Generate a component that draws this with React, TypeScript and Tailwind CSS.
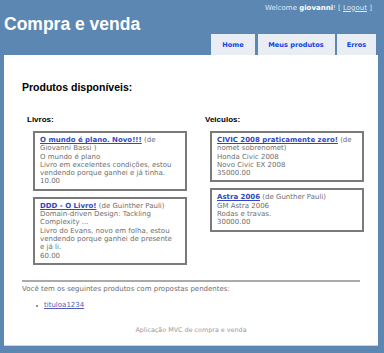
import React from "react";

const body = "font-['DejaVu_Sans',Verdana,sans-serif]";
const head = "font-['Liberation_Sans',Arial,sans-serif]";

function Card({ children }: { children: React.ReactNode }) {
  return (
    <div className="border-2 border-[#7a7a7a] bg-white px-[5px] py-[3px] text-[7px] leading-[8.3px] text-[#6e6e6e] whitespace-nowrap">
      {children}
    </div>
  );
}

function T({ children }: { children: React.ReactNode }) {
  return <a className="font-bold text-[#3347c0] underline">{children}</a>;
}

export default function App() {
  return (
    <div className={`w-[384px] h-[353px] bg-[#5c87b2] overflow-hidden ${body}`}>
      <div className="flex h-[55px] justify-between">
        <div className={`${head} pl-[4px] pt-[14px] text-[17.5px] leading-[20px] font-bold text-white`}>
          Compra e venda
        </div>
        <div className="flex flex-col justify-between items-end pr-[8px]">
          <div className="pt-[3.5px] pr-[4px] text-[7px] leading-[8.5px] text-[#dfe7f0]">
            Welcome <b className="text-white">giovanni</b>! [ <span className="underline">Logout</span> ]
          </div>
          <div className="flex gap-[2.5px]">
            <div className="w-[44px] h-[21px] bg-[#e8eef4] flex items-center justify-center text-[6.6px] font-bold text-[#1640e0] pt-[2px]">Home</div>
            <div className="w-[77px] h-[21px] bg-[#e8eef4] flex items-center justify-center text-[6.6px] font-bold text-[#1640e0] pt-[2px]">Meus produtos</div>
            <div className="w-[39px] h-[21px] bg-[#e8eef4] flex items-center justify-center text-[6.6px] font-bold text-[#1640e0] pt-[2px]">Erros</div>
          </div>
        </div>
      </div>
      <div className="ml-[4px] w-[374px] h-[291px] bg-white border-b border-[#c8d6e4] px-[18px] pt-[26px]">
        <h2 className={`${head} text-[10.5px] leading-[12px] font-bold text-black`}>Produtos disponíveis:</h2>
        <div className="flex mt-[22px]">
          <div className="w-[178px]">
            <h3 className={`${head} ml-[5px] text-[8px] leading-[10px] font-bold text-black`}>Livros:</h3>
            <div className="ml-[11px] w-[154px] mt-[6px] flex flex-col gap-[6px]">
              <Card>
                <T>O mundo é plano. Novo!!!</T> (de<br />
                Giovanni Bassi )<br />
                O mundo é plano<br />
                Livro em excelentes condições, estou<br />
                vendendo porque ganhei e já tinha.<br />
                10.00
              </Card>
              <Card>
                <T>DDD - O Livro!</T> (de Guinther Pauli)<br />
                Domain-driven Design: Tackling<br />
                Complexity ...<br />
                Livro do Evans, novo em folha, estou<br />
                vendendo porque ganhei de presente<br />
                e já li.<br />
                60.00
              </Card>
            </div>
          </div>
          <div className="w-[160px]">
            <h3 className={`${head} ml-[5px] text-[8px] leading-[10px] font-bold text-black`}>Veiculos:</h3>
            <div className="ml-[10px] w-[154px] mt-[6px] flex flex-col gap-[6px]">
              <Card>
                <T>CIVIC 2008 praticamente zero!</T> (de<br />
                nomet sobrenomet)<br />
                Honda Civic 2008<br />
                Novo Civic EX 2008<br />
                35000.00
              </Card>
              <Card>
                <T>Astra 2006</T> (de Gunther Pauli)<br />
                GM Astra 2006<br />
                Rodas e travas.<br />
                30000.00
              </Card>
            </div>
          </div>
        </div>
        <div className="mt-[15px] h-[2px] bg-[#aaaaaa]" />
        <p className="mt-[3.5px] text-[7px] leading-[8.5px] text-[#6e6e6e]">
          Você tem os seguintes produtos com propostas pendentes:
        </p>
        <div className="mt-[7.5px] flex items-center text-[7px] leading-[8.5px]">
          <span className="ml-[14px] w-[2px] h-[2px] rounded-full bg-[#6e6e6e]" />
          <a className="ml-[6px] text-[#505abc] underline">tituloa1234</a>
        </div>
        <p className="mt-[17.5px] text-center text-[6.4px] leading-[7.7px] text-[#9a9a9a]">
          Aplicação MVC de compra e venda
        </p>
      </div>
    </div>
  );
}
